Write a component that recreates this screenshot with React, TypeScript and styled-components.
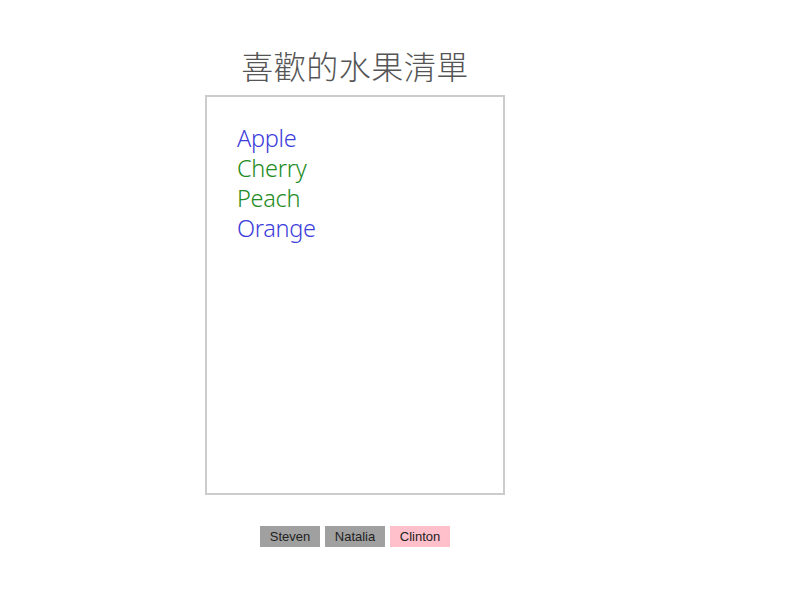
import React from "react";
import styled, { createGlobalStyle } from "styled-components";

const GlobalStyle = createGlobalStyle`
  body {
    margin: 0;
    background: #fff;
    font-family: "Noto Sans", "Noto Sans CJK TC", sans-serif;
  }
`;

const Page = styled.div`
  width: 300px;
  margin-left: 205px;
  display: flex;
  flex-direction: column;
  align-items: center;
`;

const Title = styled.h1`
  margin: 40px 0 0;
  height: 55px;
  font-family: "Noto Sans CJK TC", "Noto Sans", sans-serif;
  font-size: 32px;
  font-weight: 300;
  line-height: 50px;
  color: #555;
  letter-spacing: 0.5px;
`;

const Box = styled.ul`
  box-sizing: border-box;
  width: 300px;
  height: 400px;
  margin: 0;
  padding: 26px 30px;
  list-style: none;
  border: 2px solid #ccc;
`;

const Fruit = styled.li<{ $tone: "blue" | "green" }>`
  font-family: "Noto Sans", sans-serif;
  font-weight: 300;
  font-size: 23.5px;
  line-height: 30px;
  letter-spacing: -0.3px;
  color: ${p => (p.$tone === "blue" ? "#3d3ddb" : "#228b22")};
`;

const Buttons = styled.div`
  display: flex;
  gap: 5px;
  margin-top: 31px;
`;

const NameButton = styled.button<{ $active?: boolean }>`
  width: 60px;
  height: 21px;
  padding: 0;
  border: none;
  font-family: "Liberation Sans", Arial, sans-serif;
  font-size: 13px;
  color: #222;
  background: ${p => (p.$active ? "#ffc0cb" : "#a0a0a0")};
`;

const fruits: { name: string; tone: "blue" | "green" }[] = [
  { name: "Apple", tone: "blue" },
  { name: "Cherry", tone: "green" },
  { name: "Peach", tone: "green" },
  { name: "Orange", tone: "blue" }
];

const people = ["Steven", "Natalia", "Clinton"];

const App = () => (
  <>
    <GlobalStyle />
    <Page>
      <Title>喜歡的水果清單</Title>
      <Box>
        {fruits.map(f => (
          <Fruit key={f.name} $tone={f.tone}>
            {f.name}
          </Fruit>
        ))}
      </Box>
      <Buttons>
        {people.map(name => (
          <NameButton key={name} $active={name === "Clinton"}>
            {name}
          </NameButton>
        ))}
      </Buttons>
    </Page>
  </>
);

export default App;
